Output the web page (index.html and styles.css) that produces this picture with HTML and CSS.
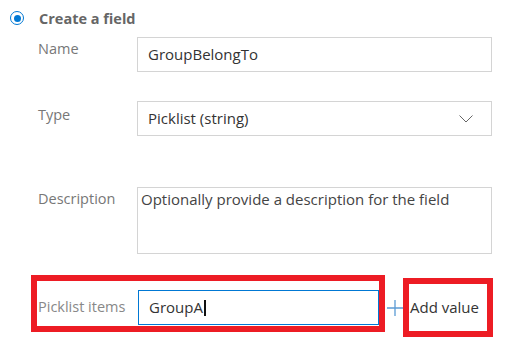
FILE: index.html
```html
<!DOCTYPE html>
<html lang="en">
<head>
    <meta charset="UTF-8">
    <title>Create a field</title>
    <link rel="stylesheet" href="styles.css">
</head>
<body>
    <div class="panel">
        <div class="option">
            <span class="radio"><span class="dot"></span></span>
            <span class="option-title">Create a field</span>
        </div>

        <div class="row row-name">
            <label class="label">Name</label>
            <div class="field">GroupBelongTo</div>
        </div>

        <div class="row row-type">
            <label class="label">Type</label>
            <div class="field select">
                <span>Picklist (string)</span>
                <svg class="chevron" width="14" height="8" viewBox="0 0 14 8">
                    <path d="M0.5 0.5 L7 7 L13.5 0.5" fill="none" stroke="#666" stroke-width="1"/>
                </svg>
            </div>
        </div>

        <div class="row row-desc">
            <label class="label">Description</label>
            <div class="field textarea">Optionally provide a description for the field</div>
        </div>

        <div class="row row-pick">
            <div class="mark mark-items">
                <label class="label">Picklist items</label>
                <div class="field focused">GroupA<span class="caret"></span></div>
            </div>
            <svg class="plus" width="16" height="16" viewBox="0 0 16 16">
                <path d="M8 0 V16 M0 8 H16" stroke="#5b9bd5" stroke-width="1.3"/>
            </svg>
            <div class="mark mark-add">Add value</div>
        </div>
    </div>
</body>
</html>
```

FILE: styles.css
```css
body {
    margin: 0;
    background: #fff;
    font-family: "Open Sans", "Noto Sans", sans-serif;
    color: #333;
}
.panel {
    padding: 10px 0 0 10px;
}
.option {
    display: flex;
    align-items: center;
    height: 16px;
}
.radio {
    width: 14px;
    height: 14px;
    border: 1.5px solid #0078d4;
    border-radius: 50%;
    box-sizing: border-box;
    display: flex;
    align-items: center;
    justify-content: center;
}
.dot {
    width: 7px;
    height: 7px;
    border-radius: 50%;
    background: #0078d4;
}
.option-title {
    margin-left: 15px;
    font-size: 14.5px;
    font-weight: 700;
    color: #666;
}
.row {
    display: flex;
    align-items: flex-start;
    margin-left: 28px;
}
.label {
    width: 99px;
    font-size: 14.5px;
    color: #777;
    padding-top: 2px;
}
.field {
    box-sizing: border-box;
    width: 355px;
    height: 35px;
    border: 1px solid #d4d4d4;
    padding: 0 10px;
    font-size: 15px;
    line-height: 33px;
    color: #333;
}
.row-name {
    margin-top: 11px;
}
.row-type {
    margin-top: 29px;
}
.row-type .label {
    padding-top: 4px;
}
.select {
    display: flex;
    justify-content: space-between;
    align-items: center;
}
.chevron {
    margin-right: 8px;
}
.row-desc {
    margin-top: 51px;
}
.textarea {
    height: 67px;
    padding: 1px 3px;
    line-height: 20px;
    color: #444;
}
.row-pick {
    margin-top: 21px;
    margin-left: 21px;
    align-items: flex-start;
}
.mark {
    border: 6px solid #ed1c24;
    box-sizing: border-box;
}
.mark-items {
    display: flex;
    width: 354px;
    height: 57px;
    padding: 9px 0 0 1px;
}
.mark-items .label {
    width: 100px;
    padding-top: 7px;
    color: #888;
}
.focused {
    width: 241px;
    border-color: #0078d4;
    display: flex;
    align-items: center;
}
.caret {
    width: 2px;
    height: 16px;
    background: #111;
    margin-left: 1px;
}
.plus {
    margin: 25px 0 0 2px;
}
.mark-add {
    width: 90px;
    height: 59px;
    margin-top: 3px;
    padding: 13px 0 0 1px;
    font-size: 15px;
    color: #333;
}
```
